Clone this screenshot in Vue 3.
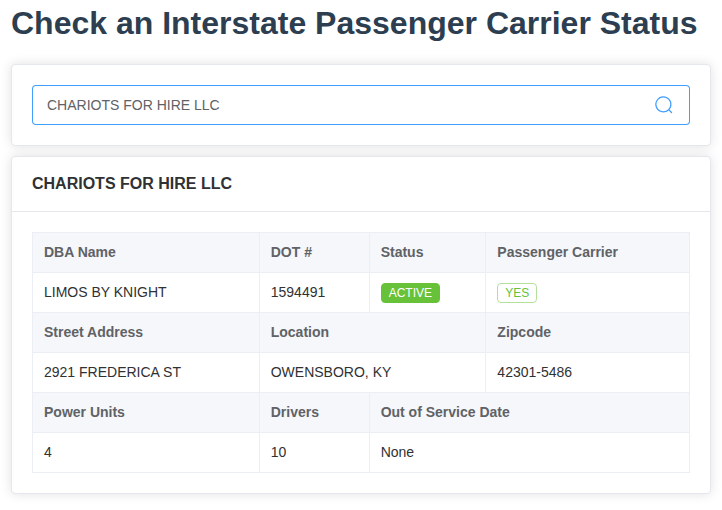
<template>
  <div class="page">
    <h1 class="title">Check an Interstate Passenger Carrier Status</h1>

    <div class="card">
      <div class="card-body">
        <div class="search">
          <input v-model="query" class="search-input" type="text" spellcheck="false" />
          <svg class="search-icon" viewBox="0 0 1024 1024">
            <path
              fill="currentColor"
              d="m795.904 750.72 124.992 124.928a32 32 0 0 1-45.248 45.248L750.656 795.904a416 416 0 1 1 45.248-45.248zM480 832a352 352 0 1 0 0-704 352 352 0 0 0 0 704z"
            />
          </svg>
        </div>
      </div>
    </div>

    <div class="card">
      <div class="card-header">{{ carrier.name }}</div>
      <div class="card-body">
        <table class="desc">
          <tbody v-for="(row, i) in rows" :key="i">
            <tr>
              <th v-for="cell in row" :key="cell.label" :colspan="cell.span || 1">{{ cell.label }}</th>
            </tr>
            <tr>
              <td v-for="cell in row" :key="cell.label" :colspan="cell.span || 1">
                <span v-if="cell.tag" class="tag" :class="`tag-${cell.tag}`">{{ cell.value }}</span>
                <template v-else>{{ cell.value }}</template>
              </td>
            </tr>
          </tbody>
        </table>
      </div>
    </div>
  </div>
</template>

<script setup>
import { computed, ref } from 'vue'

const query = ref('CHARIOTS FOR HIRE LLC')

const carrier = ref({
  name: 'CHARIOTS FOR HIRE LLC',
  dba: 'LIMOS BY KNIGHT',
  dot: '1594491',
  status: 'ACTIVE',
  passenger: 'YES',
  street: '2921 FREDERICA ST',
  location: 'OWENSBORO, KY',
  zipcode: '42301-5486',
  powerUnits: 4,
  drivers: 10,
  outOfService: null
})

const rows = computed(() => {
  const c = carrier.value
  return [
    [
      { label: 'DBA Name', value: c.dba },
      { label: 'DOT #', value: c.dot },
      { label: 'Status', value: c.status, tag: 'dark' },
      { label: 'Passenger Carrier', value: c.passenger, tag: 'plain' }
    ],
    [
      { label: 'Street Address', value: c.street },
      { label: 'Location', value: c.location, span: 2 },
      { label: 'Zipcode', value: c.zipcode }
    ],
    [
      { label: 'Power Units', value: c.powerUnits },
      { label: 'Drivers', value: c.drivers },
      { label: 'Out of Service Date', value: c.outOfService || 'None', span: 2 }
    ]
  ]
})
</script>

<style>
body {
  background: #fff;
}
</style>

<style scoped>
.page {
  box-sizing: border-box;
  height: 510px;
  padding: 5px 11px 0;
  overflow: hidden;
  font-family: "Liberation Sans", Arial, sans-serif;
  color: #2c3e50;
}
.title {
  margin: 0 0 22px;
  font-size: 32px;
  line-height: 37px;
  font-weight: 700;
  white-space: nowrap;
}
.card {
  margin-bottom: 10px;
  border: 1px solid #e4e7ed;
  border-radius: 4px;
  background: #fff;
  color: #303133;
  box-shadow: 0 0 12px rgba(0, 0, 0, 0.12);
}
.card-header {
  padding: 18px 20px;
  border-bottom: 1px solid #e4e7ed;
  font-size: 16px;
  line-height: 18px;
  font-weight: 700;
}
.card-body { padding: 20px; }
.search {
  box-sizing: border-box;
  display: flex;
  align-items: center;
  height: 40px;
  padding: 0 16px 0 15px;
  border-radius: 4px;
  box-shadow: 0 0 0 1px #409eff inset;
}
.search-input {
  flex: 1;
  height: 38px;
  padding: 0;
  border: none;
  outline: none;
  background: none;
  font-family: inherit;
  font-size: 14px;
  color: #606266;
}
.search-icon {
  width: 20px;
  height: 20px;
  color: #409eff;
}
.desc {
  width: 100%;
  border-collapse: collapse;
  font-size: 14px;
  line-height: 23px;
}
.desc th,
.desc td {
  box-sizing: border-box;
  padding: 8px 11px;
  border: 1px solid #ebeef5;
  text-align: left;
  font-weight: 400;
}
.desc th {
  background: #f5f7fa;
  color: #606266;
  font-weight: 700;
}
.tag {
  box-sizing: border-box;
  display: inline-flex;
  align-items: center;
  height: 20px;
  padding: 0 7px;
  border: 1px solid #67c23a;
  border-radius: 4px;
  font-size: 12px;
  line-height: 1;
  vertical-align: middle;
}
.tag-dark {
  background: #67c23a;
  color: #fff;
}
.tag-plain {
  border-color: #b3e19d;
  background: #fff;
  color: #67c23a;
}
</style>
